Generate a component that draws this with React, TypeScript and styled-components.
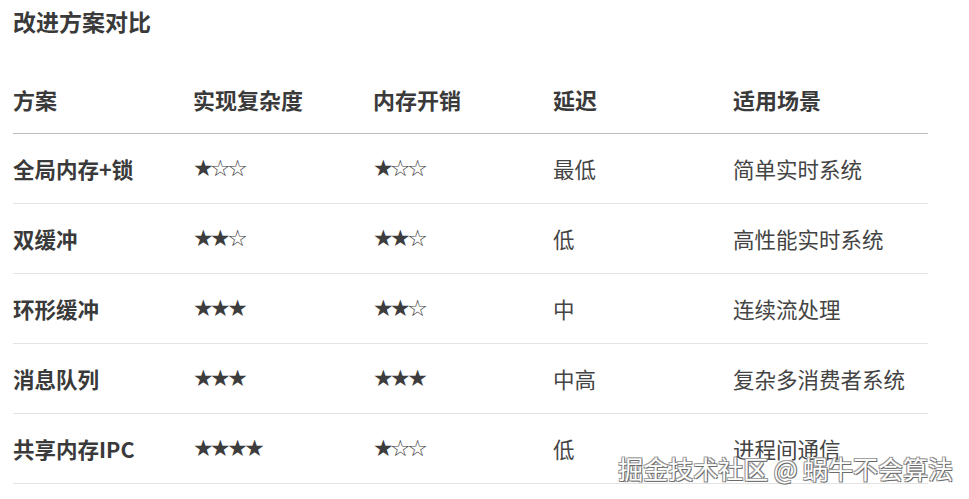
import * as React from 'react';
import styled, { createGlobalStyle } from 'styled-components';

const GlobalStyle = createGlobalStyle`
    html, body {
        margin: 0;
        padding: 0;
        background: #ffffff;
    }
    body {
        font-family: "Noto Sans CJK SC", "Noto Sans", sans-serif;
        color: #333333;
    }
`;

const Page = styled.div`
    position: relative;
    width: 969px;
    height: 499px;
    overflow: hidden;
    padding: 6px 0 0 13px;
    box-sizing: border-box;
`;

const Title = styled.h3`
    margin: 0;
    font-size: 23px;
    line-height: 30px;
    font-weight: 700;
    color: #3a3a3a;
`;

const Table = styled.div`
    margin-top: 28px;
    width: 915px;
    display: grid;
    grid-template-columns: 180px 180px 180px 180px 195px;
`;

const HeadCell = styled.div`
    height: 69px;
    display: flex;
    align-items: center;
    font-size: 22px;
    font-weight: 700;
    color: #3a3a3a;
    border-bottom: 1px solid #bdbdbd;
`;

const Cell = styled.div<{ bold?: boolean }>`
    height: 69px;
    display: flex;
    align-items: center;
    font-size: 21.5px;
    font-weight: ${(p) => (p.bold ? 700 : 400)};
    color: ${(p) => (p.bold ? '#3a3a3a' : '#444444')};
    border-bottom: 1px solid #e3e3e3;
`;

const Stars = styled.span`
    font-family: "DejaVu Sans", sans-serif;
    font-size: 23px;
    line-height: 1;
    letter-spacing: -3.5px;
    color: #3d3d3d;
`;

const Watermark = styled.div`
    position: absolute;
    right: 16px;
    bottom: 17px;
    font-size: 25px;
    line-height: 28px;
    color: #ffffff;
    text-shadow: 1px 1px 0 #6a6a6a, -1px -1px 0 #a0a0a0, 1px -1px 0 #8a8a8a, -1px 1px 0 #8a8a8a;
    white-space: nowrap;
`;

const headers = ['方案', '实现复杂度', '内存开销', '延迟', '适用场景'];

const rows = [
    ['全局内存+锁', '★☆☆', '★☆☆', '最低', '简单实时系统'],
    ['双缓冲', '★★☆', '★★☆', '低', '高性能实时系统'],
    ['环形缓冲', '★★★', '★★☆', '中', '连续流处理'],
    ['消息队列', '★★★', '★★★', '中高', '复杂多消费者系统'],
    ['共享内存IPC', '★★★★', '★☆☆', '低', '进程间通信'],
];

export default function App() {
    return (
        <>
            <GlobalStyle />
            <Page>
                <Title>改进方案对比</Title>
                <Table>
                    {headers.map((h) => (
                        <HeadCell key={h}>{h}</HeadCell>
                    ))}
                    {rows.map((r) =>
                        r.map((c, i) => (
                            <Cell key={r[0] + i} bold={i === 0}>
                                {i === 1 || i === 2 ? <Stars>{c}</Stars> : c}
                            </Cell>
                        )),
                    )}
                </Table>
                <Watermark>掘金技术社区 @ 蜗牛不会算法</Watermark>
            </Page>
        </>
    );
}
